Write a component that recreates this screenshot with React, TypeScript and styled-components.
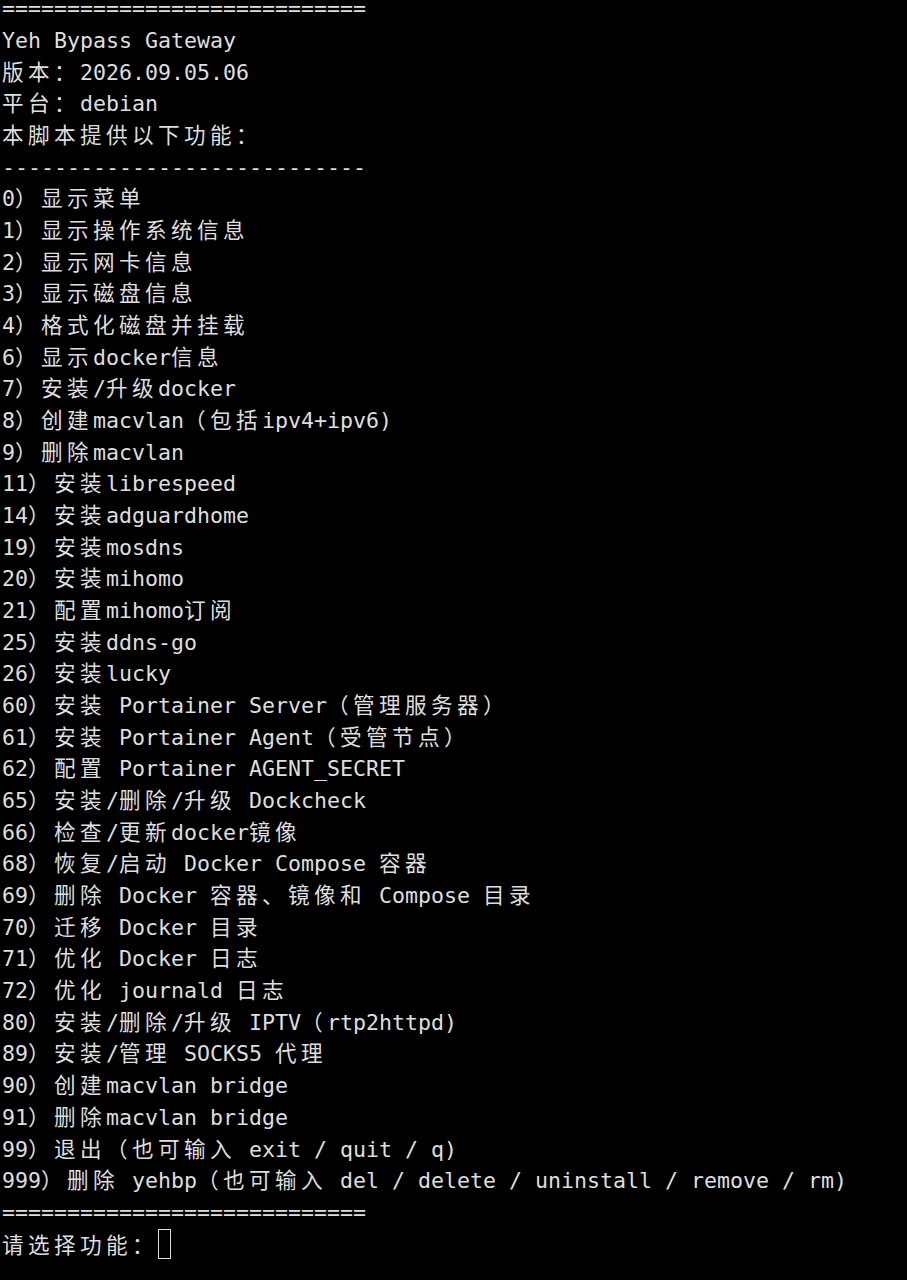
import React from "react";
import styled, { createGlobalStyle } from "styled-components";

const GlobalStyle = createGlobalStyle`
  html, body {
    margin: 0;
    padding: 0;
    background: #000;
  }
`;

const Screen = styled.main`
  background: #000;
  min-height: 1280px;
  padding-left: 2px;
  overflow: hidden;
  color: #dedede;
  font-family: "DejaVu Sans Mono", "Liberation Mono", monospace;
  font-size: 21.6px;
`;

const Lines = styled.div`
  margin-top: -6.7px;
`;

const Line = styled.div`
  height: 31.68px;
  line-height: 31.68px;
  white-space: pre;
`;

const Wide = styled.span`
  font-family: "Noto Sans CJK SC", "Noto Sans CJK JP", sans-serif;
  letter-spacing: 4.4px;
  line-height: 1;
`;

const Cursor = styled.span`
  display: inline-block;
  box-sizing: border-box;
  width: 13px;
  height: 30px;
  border: 1.5px solid #dedede;
  vertical-align: -6px;
`;

const WIDE_RE = /[\u3000-\u303f\u4e00-\u9fff\uff00-\uffef]/;

function splitRuns(text: string): { wide: boolean; text: string }[] {
  const runs: { wide: boolean; text: string }[] = [];
  for (const ch of text) {
    const wide = WIDE_RE.test(ch);
    const last = runs[runs.length - 1];
    if (last && last.wide === wide) last.text += ch;
    else runs.push({ wide, text: ch });
  }
  return runs;
}

const TermText: React.FC<{ text: string }> = ({ text }) => (
  <>
    {splitRuns(text).map((r, i) =>
      r.wide ? <Wide key={i}>{r.text}</Wide> : <React.Fragment key={i}>{r.text}</React.Fragment>
    )}
  </>
);

const rule = "============================";
const dash = "----------------------------";

const lines: string[] = [
  rule,
  "Yeh Bypass Gateway",
  "版本：2026.09.05.06",
  "平台：debian",
  "本脚本提供以下功能：",
  dash,
  "0）显示菜单",
  "1）显示操作系统信息",
  "2）显示网卡信息",
  "3）显示磁盘信息",
  "4）格式化磁盘并挂载",
  "6）显示docker信息",
  "7）安装/升级docker",
  "8）创建macvlan（包括ipv4+ipv6)",
  "9）删除macvlan",
  "11）安装librespeed",
  "14）安装adguardhome",
  "19）安装mosdns",
  "20）安装mihomo",
  "21）配置mihomo订阅",
  "25）安装ddns-go",
  "26）安装lucky",
  "60）安装 Portainer Server（管理服务器）",
  "61）安装 Portainer Agent（受管节点）",
  "62）配置 Portainer AGENT_SECRET",
  "65）安装/删除/升级 Dockcheck",
  "66）检查/更新docker镜像",
  "68）恢复/启动 Docker Compose 容器",
  "69）删除 Docker 容器、镜像和 Compose 目录",
  "70）迁移 Docker 目录",
  "71）优化 Docker 日志",
  "72）优化 journald 日志",
  "80）安装/删除/升级 IPTV（rtp2httpd)",
  "89）安装/管理 SOCKS5 代理",
  "90）创建macvlan bridge",
  "91）删除macvlan bridge",
  "99）退出（也可输入 exit / quit / q)",
  "999）删除 yehbp（也可输入 del / delete / uninstall / remove / rm)",
  rule,
];

export default function App() {
  return (
    <>
      <GlobalStyle />
      <Screen>
        <Lines>
          {lines.map((l, i) => (
            <Line key={i}>
              <TermText text={l} />
            </Line>
          ))}
          <Line>
            <TermText text="请选择功能：" />
            <Cursor />
          </Line>
        </Lines>
      </Screen>
    </>
  );
}
